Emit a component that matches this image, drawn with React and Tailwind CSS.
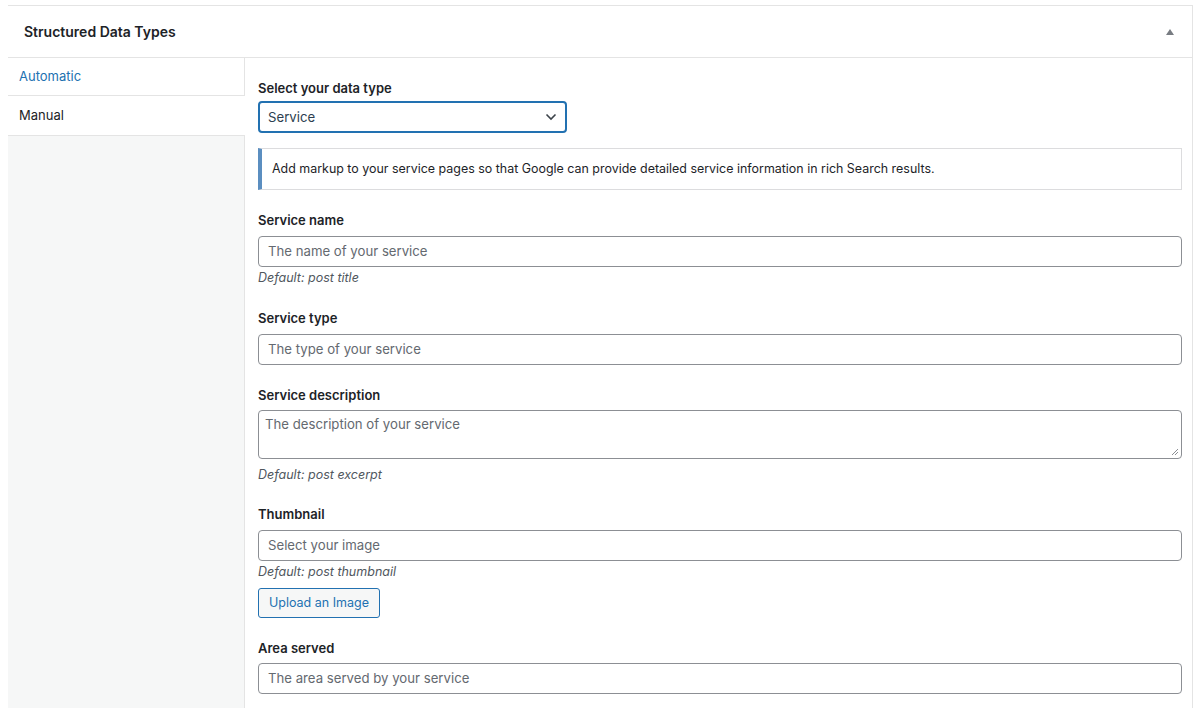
import React from "react";

function Field({ label, placeholder, desc, children, gap = "mt-[6px]" }) {
  return (
    <div className="mb-[20px]">
      <div className="text-[13px] leading-[20px] font-semibold text-[#1d2327]">{label}</div>
      <div className={`${gap} h-[31px] w-full rounded-[4px] border border-[#8c8f94] bg-white px-[9px] flex items-center text-[13.2px] text-[#646970]`}>
        {placeholder}
      </div>
      {desc && <div className="text-[12.5px] leading-[20px] italic text-[#50575e] mt-[1px]">{desc}</div>}
      {children}
    </div>
  );
}

export default function App() {
  return (
    <div className="h-[708px] w-[1200px] overflow-hidden bg-white pt-[5px] pl-[8px] pr-[7px]" style={{ fontFamily: "Inter, 'Noto Sans', sans-serif" }}>
      <div className="border-t border-r border-[#e4e4e4] h-full flex flex-col">
        <div className="h-[52px] shrink-0 border-b border-[#e4e4e4] flex items-center justify-between pl-[16px] pr-[18px]">
          <div className="text-[14px] font-semibold text-[#1d2327]">Structured Data Types</div>
          <svg width="8" height="6" viewBox="0 0 8 6"><path d="M4 0 L8 6 L0 6 Z" fill="#787c82" /></svg>
        </div>
        <div className="flex flex-1 min-h-0">
          <div className="w-[237px] shrink-0 flex flex-col bg-[#f6f7f7]">
            <div className="h-[38px] shrink-0 bg-white border-b border-r border-[#e4e4e4] flex items-center pl-[11px] text-[13px] text-[#2271b1]">Automatic</div>
            <div className="h-[40px] shrink-0 bg-white border-b border-[#e4e4e4] flex items-center pl-[11px] text-[13px] text-[#1d2327]">Manual</div>
            <div className="flex-1 border-r border-[#e4e4e4]"></div>
          </div>
          <div className="flex-1 pl-[13px] pr-[10px] pt-[20px]">
            <div className="text-[13px] leading-[20px] font-semibold text-[#1d2327]">Select your data type</div>
            <div className="mt-[3px] w-[309px] h-[32px] rounded-[4px] border-2 border-[#2271b1] flex items-center justify-between pl-[8px] pr-[8px] text-[13.2px] text-[#2c3e50]">
              <span className="pt-[1px]">Service</span>
              <svg width="12" height="8" viewBox="0 0 12 8"><path d="M1.5 1.5 L6 6 L10.5 1.5" fill="none" stroke="#3c434a" strokeWidth="1.6" /></svg>
            </div>
            <div className="mt-[15px] h-[42px] border border-[#dcdcde] border-l-4 border-l-[#5b8ec0] flex items-center pl-[10px] text-[12.45px] text-[#1d2327]">
              Add markup to your service pages so that Google can provide detailed service information in rich Search results.
            </div>
            <div className="mt-[20px]">
              <Field label="Service name" placeholder="The name of your service" desc="Default: post title" />
              <Field label="Service type" placeholder="The type of your service" />
              <div className="mb-[19px]">
                <div className="text-[13px] leading-[20px] font-semibold text-[#1d2327]">Service description</div>
                <div className="relative mt-[5px] h-[49px] w-full rounded-[4px] border border-[#8c8f94] bg-white px-[6px] pt-[4px] text-[13.2px] text-[#646970]">
                  The description of your service
                  <svg className="absolute right-[2px] bottom-[2px]" width="8" height="8" viewBox="0 0 8 8"><path d="M7 1 L1 7 M7 4 L4 7" stroke="#8c8f94" strokeWidth="1" /></svg>
                </div>
                <div className="text-[12.5px] leading-[20px] italic text-[#50575e] mt-[6px]">Default: post excerpt</div>
              </div>
              <Field label="Thumbnail" placeholder="Select your image" desc="Default: post thumbnail">
                <div className="mt-[6px] inline-flex h-[30px] items-center rounded-[3px] border border-[#2271b1] bg-[#f6f7f7] px-[10px] text-[12.5px] text-[#2271b1]">Upload an Image</div>
              </Field>
              <Field label="Area served" placeholder="The area served by your service" gap="mt-[5px]" />
            </div>
          </div>
        </div>
      </div>
    </div>
  );
}
